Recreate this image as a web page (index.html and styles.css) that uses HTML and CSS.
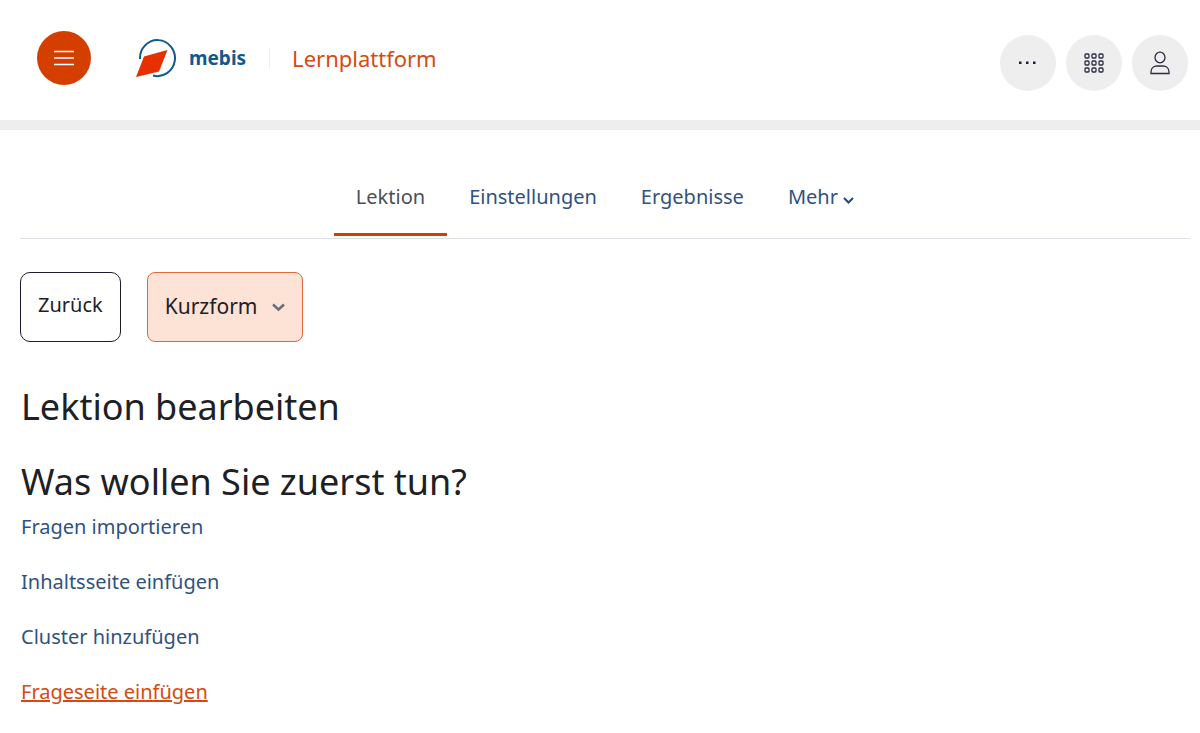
FILE: index.html
```html
<!DOCTYPE html>
<html lang="de">
<head>
    <meta charset="UTF-8">
    <meta name="viewport" content="width=device-width, initial-scale=1.0">
    <title>Lektion bearbeiten</title>
    <link rel="stylesheet" href="styles.css">
</head>
<body>
    <header class="header">
        <div class="header-left">
            <button class="menu-button" type="button" aria-label="Menü">
                <svg width="20" height="16" viewBox="0 0 20 16" stroke="#fff" stroke-width="1.5">
                    <path d="M0 1.5h20M0 8h20M0 14.5h20"/>
                </svg>
            </button>
            <a class="brand" href="#">
                <svg width="42" height="40" viewBox="0 0 42 40">
                    <path d="M5 21A17.500 18 0 1 1 18 37.500" fill="none" stroke="#10588f" stroke-width="2"/>
                    <path d="M9 18.500L32.500 12l-8.500 21.500L1 39z" fill="#e63000"/>
                </svg>
                <span class="brand-name">mebis</span>
            </a>
            <a class="platform" href="#">Lernplattform</a>
        </div>
        <div class="header-right">
            <button class="round-button" type="button" aria-label="Weitere Optionen">
                <svg width="20" height="22" viewBox="0 0 20 22" fill="#1c1c38">
                    <path d="M1 9.500h2.500v2.500H1zM8 9.500h2.500v2.500H8zM15 9.500h2.500v2.500H15z"/>
                </svg>
            </button>
            <button class="round-button" type="button" aria-label="Apps">
                <svg width="21" height="20" viewBox="0 0 21 20" fill="none" stroke="#2b2b42" stroke-width="1.3">
                    <rect x="1" y="1" width="4" height="4" rx="1"/>
                    <rect x="8" y="1" width="4" height="4" rx="1"/>
                    <rect x="15" y="1" width="4" height="4" rx="1"/>
                    <rect x="1" y="8" width="4" height="4" rx="1"/>
                    <rect x="8" y="8" width="4" height="4" rx="1"/>
                    <rect x="15" y="8" width="4" height="4" rx="1"/>
                    <rect x="1" y="15" width="4" height="4" rx="1"/>
                    <rect x="8" y="15" width="4" height="4" rx="1"/>
                    <rect x="15" y="15" width="4" height="4" rx="1"/>
                </svg>
            </button>
            <button class="round-button" type="button" aria-label="Profil">
                <svg width="21" height="24" viewBox="0 0 21 24" fill="none" stroke="#2b2b42" stroke-width="1.3">
                    <ellipse cx="10" cy="6.500" rx="5" ry="5.300"/>
                    <path d="M1 22.500v-1.500c0-4 3-6 6-6h6c3 0 6 2 6 6v1.500z"/>
                </svg>
            </button>
        </div>
    </header>

    <main class="content">
        <nav class="tabs">
            <a class="tab active" href="#">Lektion</a>
            <a class="tab" href="#">Einstellungen</a>
            <a class="tab" href="#">Ergebnisse</a>
            <a class="tab" href="#">Mehr
                <svg width="11" height="7" viewBox="0 0 11 7" fill="none" stroke="#1f4a80" stroke-width="2">
                    <path d="M1 1l4.500 4.500L10 1"/>
                </svg>
            </a>
        </nav>

        <div class="actions">
            <button class="back-button" type="button">Zurück</button>
            <div class="view-select">
                <select aria-label="Ansicht">
                    <option>Kurzform</option>
                </select>
                <svg class="view-arrow" width="13" height="9" viewBox="0 0 13 9" fill="none" stroke="#66707a" stroke-width="2.500">
                    <path d="M1 1.500l5.500 5L12 1.500"/>
                </svg>
            </div>
        </div>

        <div class="lesson">
            <h1>Lektion bearbeiten</h1>
            <h2>Was wollen Sie zuerst tun?</h2>
            <ul class="links">
                <li><a href="#">Fragen importieren</a></li>
                <li><a href="#">Inhaltsseite einfügen</a></li>
                <li><a href="#">Cluster hinzufügen</a></li>
                <li><a class="current" href="#">Frageseite einfügen</a></li>
            </ul>
        </div>
    </main>
</body>
</html>
```

FILE: styles.css
```css
* {
    box-sizing: border-box;
}

body {
    margin: 0;
    background-color: #fff;
    color: #1d2125;
    font-family: "Noto Sans", sans-serif;
    font-size: 20px;
}

a {
    color: #2f5282;
    text-decoration: none;
}

button,
select {
    font-family: inherit;
    cursor: pointer;
}

.header {
    display: flex;
    justify-content: space-between;
    align-items: flex-start;
    padding: 31px 12px 29px 37px;
    border-bottom: 10px solid #eee;
}

.header-left {
    display: flex;
    align-items: center;
}

.menu-button,
.round-button {
    display: flex;
    align-items: center;
    justify-content: center;
    padding: 0;
    border: none;
    border-radius: 50%;
}

.menu-button {
    width: 54px;
    height: 54px;
    background-color: #d43f00;
}

.brand {
    display: flex;
    align-items: center;
    gap: 12px;
    margin-left: 44px;
}

.brand-name {
    color: #10588f;
    font-weight: bold;
    font-size: 19px;
    line-height: 24px;
}

.platform {
    margin-left: 23px;
    padding-left: 22px;
    border-left: 1px solid #eee;
    color: #d64a10;
    font-size: 22px;
    line-height: 20px;
}

.header-right {
    display: flex;
    gap: 10px;
    padding-top: 4px;
}

.round-button {
    width: 56px;
    height: 56px;
    background-color: #eee;
}

.content {
    padding: 29px 10px 20px 20px;
}

.tabs {
    display: flex;
    justify-content: center;
    border-bottom: 1px solid #dee2e6;
}

.tab {
    margin-bottom: 2px;
    padding: 24px 22px 22px;
    border-bottom: 3px solid transparent;
    line-height: 28px;
}

.tab.active {
    border-bottom-color: #d43f00;
    color: #495057;
}

.tab svg {
    vertical-align: 0;
}

.actions {
    display: flex;
    gap: 26px;
    margin-top: 33px;
}

.back-button {
    height: 70px;
    padding: 0 17px 6px;
    background-color: #fff;
    border: 1px solid #1c1c2e;
    border-radius: 10px;
    color: #1d2125;
    font-size: 20px;
}

.view-select {
    position: relative;
}

.view-select select {
    appearance: none;
    height: 70px;
    padding: 0 44px 2px 17px;
    background-color: #fde2d6;
    border: 1px solid #e0693c;
    border-radius: 8px;
    color: #1d2125;
    font-size: 21px;
}

.view-arrow {
    position: absolute;
    right: 18px;
    top: 31px;
    pointer-events: none;
}

.lesson {
    padding: 43px 1px 0;
}

h1,
h2 {
    margin: 0;
    font-size: 36px;
    font-weight: normal;
    line-height: 44px;
}

h2 {
    margin-top: 31px;
}

.links {
    display: flex;
    flex-direction: column;
    gap: 27px;
    margin: 9px 0 0;
    padding: 0;
    list-style: none;
    line-height: 28px;
}

.links .current {
    color: #d64a10;
    text-decoration: underline;
}
```
